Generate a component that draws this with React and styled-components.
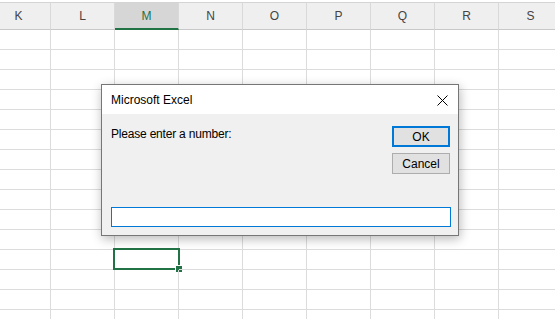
import React from "react";
import styled, { createGlobalStyle } from "styled-components";

const Global = createGlobalStyle`
  html, body { margin: 0; padding: 0; background: #fff; overflow: hidden; }
  * { box-sizing: border-box; }
`;

const Screen = styled.div`
  position: relative;
  width: 555px;
  height: 319px;
  overflow: hidden;
  background: #fff;
  font-family: "Liberation Sans", Arial, sans-serif;
`;

const Sheet = styled.div`
  display: grid;
  grid-template-columns: repeat(9, 64px);
  margin-left: -13px;
  padding-top: 2px;
`;

const HeaderCell = styled.div`
  height: 28px;
  display: flex;
  align-items: center;
  justify-content: center;
  background: ${(p) => (p.$active ? "#d6d6d6" : "#efefef")};
  border-top: 1px solid #d4d4d4;
  border-right: 1px solid #d9d9d9;
  border-bottom: ${(p) => (p.$active ? "2px solid #217346" : "1px solid #c8c8c8")};
  color: ${(p) => (p.$active ? "#217346" : "#444")};
  font-size: 12px;
  padding-top: ${(p) => (p.$active ? "1px" : "0")};
`;

const Cell = styled.div`
  position: relative;
  height: 20px;
  border-right: 1px solid #dcdcdc;
  border-bottom: 1px solid #dcdcdc;
`;

const Selection = styled.div`
  position: absolute;
  left: -2px;
  top: -2px;
  right: -2px;
  bottom: -1px;
  border: 2px solid #217346;
`;

const FillHandle = styled.div`
  position: absolute;
  right: -4px;
  bottom: -4px;
  width: 6px;
  height: 6px;
  background: #217346;
  box-shadow: 0 0 0 1px #fff;
`;

const Dialog = styled.div`
  position: absolute;
  left: 101px;
  top: 84px;
  width: 358px;
  height: 152px;
  display: flex;
  flex-direction: column;
  border: 1px solid #767676;
  background: #f0f0f0;
  box-shadow: 1px 3px 10px rgba(0, 0, 0, 0.28);
`;

const TitleBar = styled.div`
  height: 29px;
  flex: none;
  display: flex;
  align-items: center;
  justify-content: space-between;
  padding: 0 10px 0 9px;
  background: #fff;
  color: #000;
  font-size: 12px;
`;

const CloseIcon = styled.svg`
  width: 11px;
  height: 11px;
  display: block;
  margin-top: 1px;
`;

const Body = styled.div`
  flex: 1;
  display: flex;
  flex-direction: column;
  padding: 12px 8px 8px 9px;
`;

const TopRow = styled.div`
  display: flex;
  justify-content: space-between;
  align-items: flex-start;
`;

const Prompt = styled.div`
  font-size: 12px;
  letter-spacing: -0.2px;
  color: #000;
  padding-top: 1px;
`;

const Buttons = styled.div`
  display: flex;
  flex-direction: column;
  gap: 6px;
`;

const Button = styled.div`
  width: 58px;
  height: 21px;
  display: flex;
  align-items: center;
  justify-content: center;
  background: #e1e1e1;
  border: ${(p) => (p.$default ? "2px solid #0078d7" : "1px solid #adadad")};
  font-size: 12px;
  color: #000;
`;

const Input = styled.div`
  margin-top: auto;
  width: 340px;
  height: 20px;
  background: #fff;
  border: 1px solid #0078d7;
`;

const cols = ["K", "L", "M", "N", "O", "P", "Q", "R", "S"];
const ROWS = 15;

export default function App() {
  return (
    <>
      <Global />
      <Screen>
        <Sheet>
          {cols.map((c) => (
            <HeaderCell key={c} $active={c === "M"}>
              {c}
            </HeaderCell>
          ))}
          {Array.from({ length: ROWS }).map((_, r) =>
            cols.map((c) => (
              <Cell key={`${r}-${c}`}>
                {r === 11 && c === "M" && (
                  <Selection>
                    <FillHandle />
                  </Selection>
                )}
              </Cell>
            ))
          )}
        </Sheet>
        <Dialog>
          <TitleBar>
            <span>Microsoft Excel</span>
            <CloseIcon viewBox="0 0 11 11">
              <path d="M0.5 0.5 L10.5 10.5 M10.5 0.5 L0.5 10.5" stroke="#000" strokeWidth="1" fill="none" />
            </CloseIcon>
          </TitleBar>
          <Body>
            <TopRow>
              <Prompt>Please enter a number:</Prompt>
              <Buttons>
                <Button $default>OK</Button>
                <Button>Cancel</Button>
              </Buttons>
            </TopRow>
            <Input />
          </Body>
        </Dialog>
      </Screen>
    </>
  );
}
